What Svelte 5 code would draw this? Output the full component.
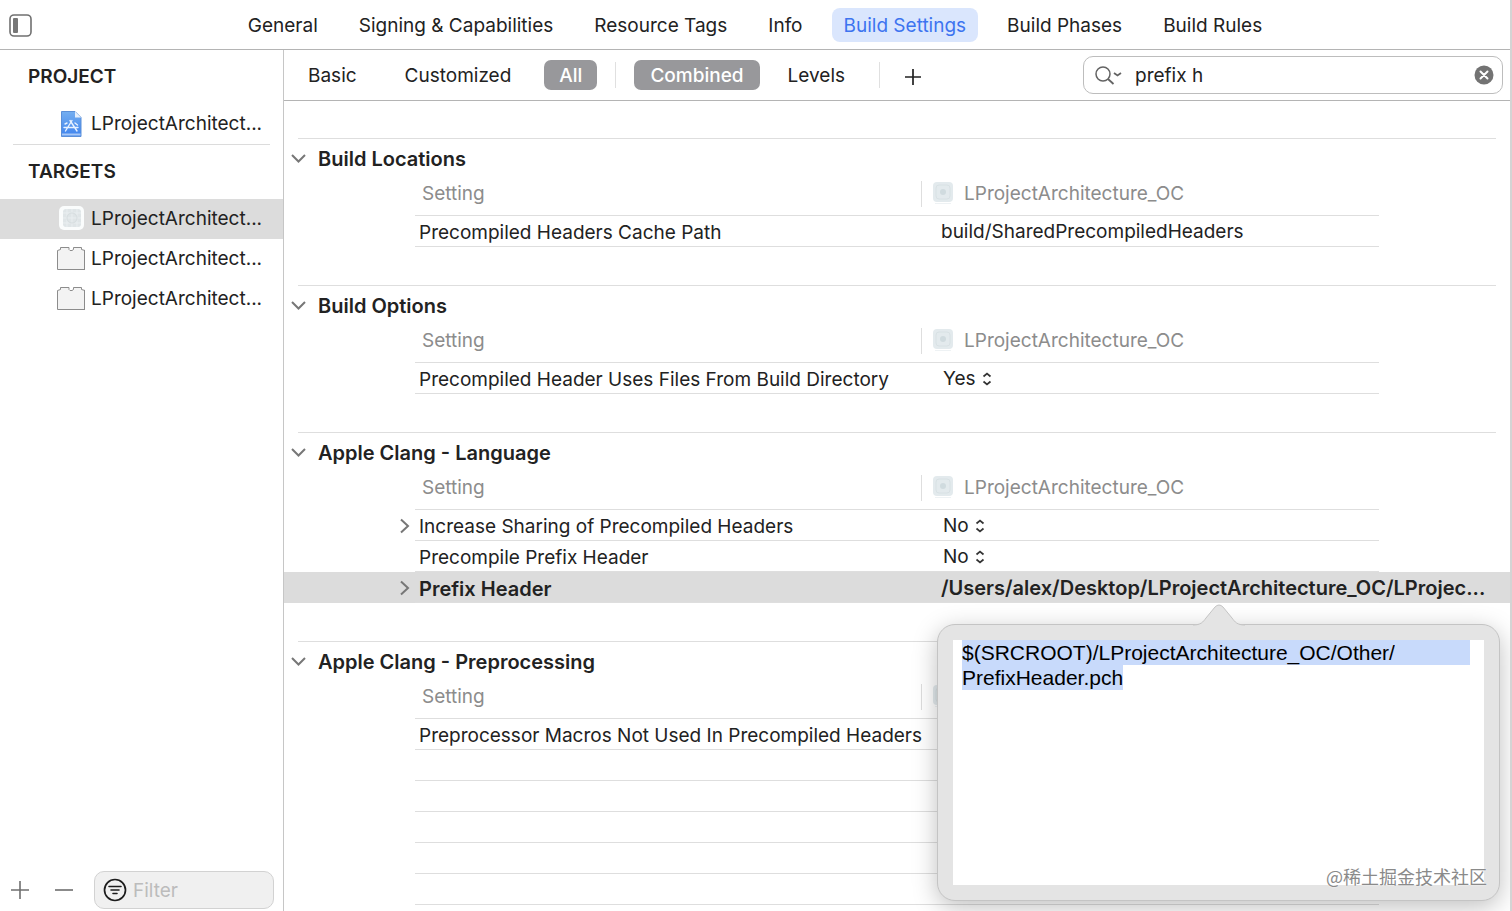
<script>
	import { onMount } from "svelte";

	let tabs = [
		"General",
		"Signing & Capabilities",
		"Resource Tags",
		"Info",
		"Build Settings",
		"Build Phases",
		"Build Rules",
	];
	let activeTab = "Build Settings";

	let targets = [
		{ name: "LProjectArchitect...", kind: "app" },
		{ name: "LProjectArchitect...", kind: "bundle" },
		{ name: "LProjectArchitect...", kind: "bundle" },
	];
	let activeTarget = 0;

	let scope = "All";
	let view = "Combined";
	let search = "prefix h";
	let filter = "";

	let sections = [
		{
			title: "Build Locations",
			rows: [{ name: "Precompiled Headers Cache Path", value: "build/SharedPrecompiledHeaders" }],
		},
		{
			title: "Build Options",
			rows: [{ name: "Precompiled Header Uses Files From Build Directory", choice: "Yes" }],
		},
		{
			title: "Apple Clang - Language",
			rows: [
				{ name: "Increase Sharing of Precompiled Headers", choice: "No", expands: true },
				{ name: "Precompile Prefix Header", choice: "No" },
				{
					name: "Prefix Header",
					value: "/Users/alex/Desktop/LProjectArchitecture_OC/LProjec...",
					expands: true,
					editing: true,
				},
			],
		},
		{
			title: "Apple Clang - Preprocessing",
			rows: [{ name: "Preprocessor Macros Not Used In Precompiled Headers", value: "" }, {}, {}, {}, {}, {}],
		},
	];

	let headerPath = "$(SRCROOT)/LProjectArchitecture_OC/Other/\nPrefixHeader.pch";

	onMount(() => {
		const field = document.querySelector(".popover textarea");
		field.focus({ preventScroll: true });
		field.select();
	});
</script>

<div class="window">
	<header class="topbar">
		<button class="plain toggle" aria-label="Toggle sidebar">
			<svg width="24" height="24" viewBox="0 0 24 24">
				<rect x="1" y="2" width="21" height="21" rx="4" fill="none" stroke="#707070" stroke-width="1.6" />
				<rect x="4" y="5" width="5" height="15" rx="1" fill="#777" />
			</svg>
		</button>
		<nav>
			{#each tabs as tab}
				<button class="tab" class:active={tab === activeTab} on:click={() => (activeTab = tab)}>{tab}</button>
			{/each}
		</nav>
	</header>

	<div class="body">
		<aside>
			<h2>PROJECT</h2>
			<button class="item">
				<svg width="28" height="28" viewBox="0 0 28 28">
					<defs>
						<linearGradient id="doc" x1="0" y1="0" x2="0" y2="1">
							<stop offset="0" stop-color="#74aef0" />
							<stop offset="1" stop-color="#3f83ee" />
						</linearGradient>
					</defs>
					<path d="M4.500 1.500H18L24 7.500V26.500H4.500Z" fill="url(#doc)" stroke="#5b8fd8" />
					<path d="M18 1.500V7.500H24Z" fill="#e6effb" />
					<path d="M5 24.500H23.500" stroke="#a8c8f6" stroke-width="2" />
					<path d="M13 10.500L20 21M15 10.500L8.500 21M7 17.500H21M8 14L10 13M18 13L20.500 15" fill="none" stroke="#e8f2ff" stroke-width="1.400" stroke-linecap="round" />
				</svg>
				<span>LProjectArchitect...</span>
			</button>
			<hr />
			<h2>TARGETS</h2>
			{#each targets as target, i}
				<button class="item" class:selected={i === activeTarget} on:click={() => (activeTarget = i)}>
					{#if target.kind === "app"}
						<svg width="28" height="28" viewBox="0 0 28 28">
							<rect x="2" y="1" width="25" height="24" rx="5" fill="#fafcfc" />
							<rect x="6" y="4" width="18" height="18" rx="3" fill="#dfe5e7" />
							<path d="M10 4V22M15 4V22M20 4V22M6 8H24M6 13H24M6 18H24" stroke="#e9eef0" />
							<circle cx="15" cy="13" r="5" fill="none" stroke="#d6dddf" />
						</svg>
					{:else}
						<svg width="28" height="28" viewBox="0 0 28 28">
							<path d="M.5 24.500V5.500L3.500 4.500V2.500H12V4.500L13 5.500H15L16.500 4.500V2.500H24.500V4.500L28 5.500V24.500Z" fill="#f3f3f3" stroke="#8c8c8c" />
							<path d="M27.500 5V25" stroke="#8c8c8c" />
						</svg>
					{/if}
					<span>{target.name}</span>
				</button>
			{/each}

			<footer>
				<button class="plain" aria-label="Add target">
					<svg width="20" height="20" viewBox="0 0 20 20"><path d="M1 10H19M10 1V19" stroke="#6f6f6f" stroke-width="1.600" /></svg>
				</button>
				<button class="plain" aria-label="Remove target">
					<svg width="20" height="20" viewBox="0 0 20 20"><path d="M1 10H19" stroke="#6f6f6f" stroke-width="1.600" /></svg>
				</button>
				<label class="filter">
					<svg width="24" height="24" viewBox="0 0 24 24">
						<circle cx="12" cy="12" r="10.500" fill="none" stroke="#1c1c1c" stroke-width="1.700" />
						<path d="M6 8.500H18M8 12H16M10 15.500H14" stroke="#1c1c1c" stroke-width="1.600" stroke-linecap="round" />
					</svg>
					<input type="text" placeholder="Filter" aria-label="Filter" bind:value={filter} />
				</label>
			</footer>
		</aside>

		<main>
			<div class="scopebar">
				<div class="group scopes">
					{#each ["Basic", "Customized", "All"] as name}
						<button class="scope" class:on={name === scope} on:click={() => (scope = name)}>{name}</button>
					{/each}
				</div>
				<div class="group views">
					{#each ["Combined", "Levels"] as name}
						<button class="scope" class:on={name === view} on:click={() => (view = name)}>{name}</button>
					{/each}
				</div>
				<button class="plain add" aria-label="Add build setting">
					<svg width="18" height="18" viewBox="0 0 18 18"><path d="M1 9H17M9 1V17" stroke="#222" stroke-width="1.700" /></svg>
				</button>
				<label class="search">
					<svg width="30" height="22" viewBox="0 0 30 22">
						<circle cx="8" cy="10" r="7" fill="none" stroke="#636363" stroke-width="1.500" />
						<path d="M13 15L18.500 20" stroke="#636363" stroke-width="1.800" />
						<path d="M19 9L22.500 11.500L26 9" fill="none" stroke="#636363" stroke-width="1.800" />
					</svg>
					<input type="text" aria-label="Search settings" bind:value={search} />
					<button class="plain" aria-label="Clear search" on:click={() => (search = "")}>
						<svg width="20" height="20" viewBox="0 0 20 20">
							<circle cx="10" cy="10" r="9.500" fill="#737373" />
							<path d="M6.500 6.500L13.500 13.500M13.500 6.500L6.500 13.500" stroke="#fff" stroke-width="2" stroke-linecap="round" />
						</svg>
					</button>
				</label>
			</div>

			<div class="settings">
				{#each sections as section}
					<section>
						<h3>
							<button class="plain" aria-label="Collapse {section.title}">
								<svg width="16" height="12" viewBox="0 0 16 12"><path d="M2 2L8.500 8.500L15 2" fill="none" stroke="#777" stroke-width="2" /></svg>
							</button>
							{section.title}
						</h3>
						<table>
							<colgroup>
								<col class="gutter" />
								<col class="name-col" />
								<col />
								<col class="gutter" />
							</colgroup>
							<thead>
								<tr>
									<td></td>
									<th>Setting</th>
									<th>
										<span class="target">
											<svg width="22" height="24" viewBox="0 0 22 24">
												<rect x="0" y="0" width="20" height="20" rx="4" fill="#e3eaed" />
												<rect x="3" y="3" width="14" height="14" rx="3" fill="none" stroke="#d8e1e4" />
												<circle cx="10" cy="10" r="3" fill="#d0dbdf" />
												<path d="M2 21.500H18" stroke="#eef2f4" />
											</svg>
											LProjectArchitecture_OC
										</span>
									</th>
									<td></td>
								</tr>
							</thead>
							<tbody>
								{#each section.rows as row}
									<tr class:editing={row.editing}>
										<td class="disclose">
											{#if row.expands}
												<button class="plain" aria-label="Expand {row.name}">
													<svg width="12" height="16" viewBox="0 0 12 16"><path d="M2 1.500L9 8L2 14.500" fill="none" stroke="#777" stroke-width="2" /></svg>
												</button>
											{/if}
										</td>
										<td class="name">{row.name ?? ""}</td>
										<td class="value" colspan="2">
											{#if row.choice}
												<span class="choice">
													<select aria-label={row.name} bind:value={row.choice}>
														<option>Yes</option>
														<option>No</option>
													</select>
													<svg width="10" height="14" viewBox="0 0 10 14"><path d="M1.500 4.500L5 1.500L8.500 4.500M1.500 9.500L5 12.500L8.500 9.500" fill="none" stroke="#333" stroke-width="1.700" /></svg>
												</span>
											{:else}
												{row.value ?? ""}
											{/if}
											{#if row.editing}
												<div class="popover">
													<svg class="arrow" width="52" height="22" viewBox="0 0 52 22">
														<path d="M0 22V21C8 21 10 18 13 14L22 3Q26 -1 30 3L39 14C42 18 44 21 52 21V22Z" fill="#e4e4e4" />
														<path d="M0 21C8 21 10 18 13 14L22 3Q26 -1 30 3L39 14C42 18 44 21 52 21" fill="none" stroke="#c4c4c4" />
													</svg>
													<textarea aria-label="Prefix Header value" spellcheck="false" bind:value={headerPath}></textarea>
													<span class="watermark">@稀土掘金技术社区</span>
												</div>
											{/if}
										</td>
									</tr>
								{/each}
							</tbody>
						</table>
					</section>
				{/each}
			</div>
		</main>
	</div>
</div>

<style>
	:global(body) {
		margin: 0;
		background: #fff;
	}
	.window {
		display: flex;
		flex-direction: column;
		height: 100vh;
		box-sizing: border-box;
		overflow: hidden;
		border-right: 2px solid #d4d4d4;
		font-family: Inter, "Liberation Sans", sans-serif;
		font-size: 19px;
		line-height: 24px;
		color: #222;
	}
	button,
	input,
	select {
		font: inherit;
		color: inherit;
		border: 0;
		padding: 0;
		background: none;
	}
	input:focus,
	textarea:focus {
		outline: none;
	}
	svg {
		display: block;
		flex: none;
	}
	.plain {
		display: flex;
		flex: none;
	}

	.topbar {
		display: grid;
		grid-template-columns: 1fr auto 1fr;
		align-items: center;
		height: 49px;
		flex: none;
		border-bottom: 1px solid #b4b4b4;
	}
	.toggle {
		padding-left: 9px;
	}
	nav {
		display: flex;
		gap: 17px;
	}
	.tab {
		height: 34px;
		padding: 2px 12px 0;
		border-radius: 8px;
	}
	.tab.active {
		background: #dae6fd;
		color: #3d74f0;
	}

	.body {
		display: flex;
		flex: 1;
		min-height: 0;
	}
	aside {
		display: flex;
		flex-direction: column;
		flex: none;
		width: 283px;
		border-right: 1px solid #c6c6c6;
	}
	h2 {
		margin: 0;
		padding-left: 28px;
		font-size: 19px;
		font-weight: 600;
		line-height: 54px;
	}
	.item {
		display: flex;
		align-items: center;
		gap: 6px;
		height: 40px;
		padding-left: 57px;
	}
	.item.selected {
		background: #dcdcdc;
	}
	hr {
		width: 257px;
		margin: 0 auto;
		border: 0;
		border-top: 1px solid #dcdcdc;
	}
	footer {
		display: flex;
		align-items: center;
		gap: 24px;
		margin-top: auto;
		padding: 0 9px 2px 10px;
	}
	.filter {
		display: flex;
		align-items: center;
		gap: 6px;
		flex: 1;
		min-width: 0;
		height: 36px;
		margin-left: -4px;
		padding: 0 8px;
		border: 1px solid #d2d2d2;
		border-radius: 10px;
		background: #f0f0f0;
	}
	.filter input {
		flex: 1;
		min-width: 0;
		padding-top: 2px;
	}
	.filter input::placeholder {
		color: #bcbcbc;
	}

	main {
		display: flex;
		flex-direction: column;
		flex: 1;
		min-width: 0;
	}
	.scopebar {
		display: flex;
		align-items: center;
		height: 50px;
		flex: none;
		border-bottom: 1px solid #b4b4b4;
	}
	.group {
		display: flex;
		align-items: center;
		gap: 18px;
		padding-right: 18px;
		border-right: 1px solid #e0e0e0;
		height: 26px;
	}
	.scopes {
		padding-left: 9px;
	}
	.views {
		padding-left: 18px;
		gap: 12px;
	}
	.scope {
		height: 30px;
		padding: 1px 16px 0;
		border-radius: 7px;
	}
	.scopes .scope {
		padding: 1px 15px 0;
	}
	.scope.on {
		background: #98989b;
		color: #fff;
		font-weight: 500;
	}
	.add {
		margin-left: 24px;
		padding-top: 3px;
	}
	.search {
		display: flex;
		align-items: center;
		gap: 10px;
		width: 420px;
		height: 38px;
		box-sizing: border-box;
		margin-left: auto;
		margin-right: 7px;
		padding: 0 8px 0 11px;
		border: 1px solid #bdbdbd;
		border-radius: 10px;
	}
	.search input {
		flex: 1;
		min-width: 0;
		padding-top: 2px;
	}

	.settings {
		flex: 1;
		min-height: 0;
		padding-top: 37px;
		overflow: hidden;
	}
	section {
		padding-bottom: 38px;
		background: linear-gradient(#dedede, #dedede) no-repeat 14px 0 / calc(100% - 28px) 1px;
	}
	section:last-child {
		padding-bottom: 0;
	}
	h3 {
		display: flex;
		align-items: center;
		gap: 12px;
		height: 38px;
		margin: 0;
		padding: 2px 0 0 6px;
		font-size: 20px;
		font-weight: 600;
	}
	table {
		width: 100%;
		table-layout: fixed;
		border-collapse: collapse;
	}
	.gutter {
		width: 131px;
	}
	.name-col {
		width: 506px;
	}
	td,
	th {
		padding: 0;
		text-align: left;
		white-space: nowrap;
		font-weight: 400;
	}
	tr {
		height: 31px;
		background: linear-gradient(#dedede, #dedede) no-repeat 131px 100% / calc(100% - 262px) 1px;
	}
	thead tr {
		height: 38px;
	}
	th {
		padding: 0 0 6px 7px;
		color: #8c8c8c;
	}
	th + th {
		padding-left: 0;
	}
	.target {
		display: flex;
		align-items: center;
		gap: 9px;
		height: 26px;
		padding-left: 11px;
		border-left: 1px solid #dedede;
	}
	.disclose .plain {
		margin-left: auto;
		padding-right: 4px;
	}
	.name {
		padding: 2px 0 0 4px;
	}
	.value {
		position: relative;
		padding-left: 20px;
	}
	tr.editing {
		background-color: #dcdcdc;
	}
	tr.editing .name,
	tr.editing .value {
		font-size: 20px;
		font-weight: 600;
	}
	.choice {
		display: flex;
		align-items: center;
		gap: 6px;
		padding-left: 2px;
	}
	select {
		appearance: none;
		field-sizing: content;
	}

	.popover {
		position: absolute;
		top: calc(100% + 21px);
		left: 16px;
		right: 10px;
		height: 277px;
		box-sizing: border-box;
		padding: 15px;
		border: 1px solid #c4c4c4;
		border-radius: 18px;
		background: #e4e4e4;
		box-shadow: 0 6px 24px rgba(0, 0, 0, 0.25);
	}
	.arrow {
		position: absolute;
		bottom: calc(100% - 1px);
		left: 50%;
		margin-left: -26px;
	}
	textarea {
		display: block;
		width: 100%;
		height: 100%;
		box-sizing: border-box;
		padding: 0 14px 0 9px;
		border: 0;
		resize: none;
		font-family: "Liberation Sans", Arial, sans-serif;
		font-size: 21px;
		line-height: 25px;
		color: #000;
		background: linear-gradient(#c8dafb, #c8dafb) no-repeat 9px 0 / calc(100% - 23px) 25px #fff;
	}
	textarea::selection {
		background: #c8dafb;
		color: #000;
	}
	.watermark {
		position: absolute;
		right: 12px;
		bottom: 12px;
		font-family: "Noto Sans CJK SC", sans-serif;
		font-size: 18px;
		font-weight: 400;
		color: #8a8a8a;
		text-shadow: 0 0 2px #fff;
	}
</style>
